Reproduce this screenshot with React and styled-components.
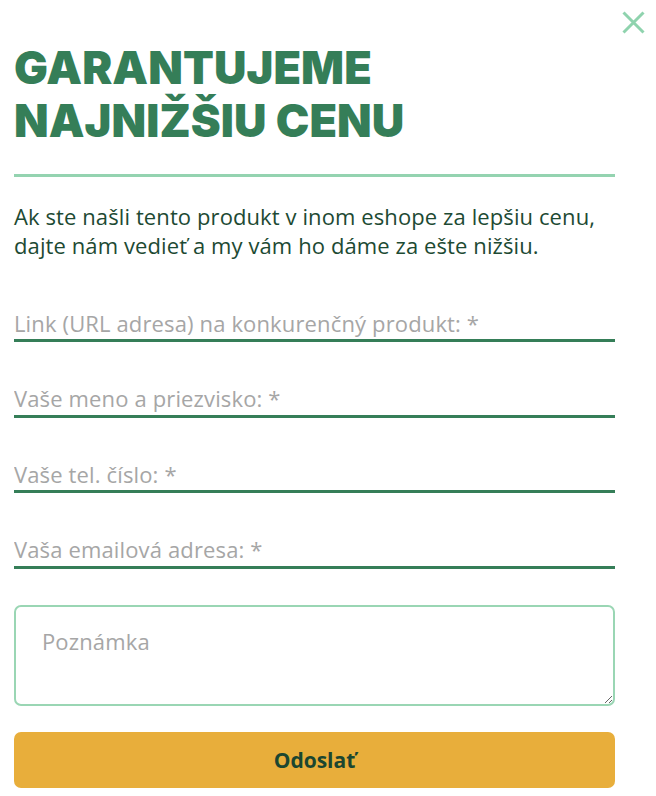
import React from "react";
import styled, { createGlobalStyle } from "styled-components";

const Global = createGlobalStyle`
  html, body { margin: 0; padding: 0; background: #fff; }
  body { font-family: "Open Sans", Roboto, sans-serif; }
  * { box-sizing: border-box; }
`;

const Modal = styled.div`
  position: relative;
  width: 656px;
  padding: 41px 41px 8px 14px;
  background: #fff;
`;

const Close = styled.button`
  position: absolute;
  top: 10px;
  right: 11px;
  width: 24px;
  height: 24px;
  padding: 0;
  border: 0;
  background: transparent;
  cursor: pointer;
  display: flex;
  align-items: center;
  justify-content: center;
`;

const Title = styled.h1`
  margin: 0;
  font-family: Inter, "Noto Sans", sans-serif;
  font-weight: 900;
  font-size: 45px;
  line-height: 53px;
  letter-spacing: 0.1px;
  color: #357e58;
  text-transform: uppercase;
`;

const Divider = styled.hr`
  margin: 27px 0 0;
  border: 0;
  height: 3px;
  background: #94d3b0;
`;

const Lead = styled.p`
  margin: 25px 0 0;
  font-family: "Open Sans", Roboto, sans-serif;
  font-size: 22px;
  line-height: 29px;
  letter-spacing: 0.1px;
  color: #1d4a33;
`;

const Form = styled.form`
  display: flex;
  flex-direction: column;
  margin-top: 37px;
`;

const Field = styled.input`
  display: block;
  width: 100%;
  height: 45px;
  margin: 0 0 30.5px;
  padding: 13px 0 4px;
  border: 0;
  border-bottom: 3px solid #357e58;
  outline: none;
  background: transparent;
  font-family: "Open Sans", Roboto, sans-serif;
  font-size: 22px;
  letter-spacing: 0.14px;
  line-height: 26px;
  color: #222;
  &::placeholder { color: #a6a6a6; opacity: 1; }
`;

const Note = styled.textarea`
  display: block;
  width: 100%;
  height: 101px;
  margin: 6px 0 0;
  padding: 21px 26px;
  border: 2px solid #9ad6b4;
  border-radius: 7px;
  outline: none;
  font-family: "Open Sans", Roboto, sans-serif;
  font-size: 22px;
  letter-spacing: 0.14px;
  line-height: 26px;
  color: #222;
  &::placeholder { color: #a6a6a6; opacity: 1; }
`;

const Submit = styled.button`
  display: block;
  width: 100%;
  height: 56px;
  margin-top: 26px;
  border: 0;
  border-radius: 7px;
  background: #e8ae3b;
  color: #1b4630;
  font-family: "Open Sans", Roboto, sans-serif;
  font-weight: 700;
  font-size: 21px;
  cursor: pointer;
`;

export default function App() {
  return (
    <>
      <Global />
      <Modal>
        <Close aria-label="Zavrieť">
          <svg width="23" height="23" viewBox="0 0 23 23">
            <path d="M1.5 1.5 L21.5 21.5 M21.5 1.5 L1.5 21.5" stroke="#8fd3ae" strokeWidth="3" fill="none" />
          </svg>
        </Close>
        <Title>
          Garantujeme
          <br />
          najnižšiu cenu
        </Title>
        <Divider />
        <Lead>
          Ak ste našli tento produkt v inom eshope za lepšiu cenu,
          <br />
          dajte nám vedieť a my vám ho dáme za ešte nižšiu.
        </Lead>
        <Form onSubmit={(e) => e.preventDefault()}>
          <Field placeholder="Link (URL adresa) na konkurenčný produkt: *" />
          <Field placeholder="Vaše meno a priezvisko: *" />
          <Field placeholder="Vaše tel. číslo: *" />
          <Field placeholder="Vaša emailová adresa: *" />
          <Note placeholder="Poznámka" />
          <Submit type="submit">Odoslať</Submit>
        </Form>
      </Modal>
    </>
  );
}
